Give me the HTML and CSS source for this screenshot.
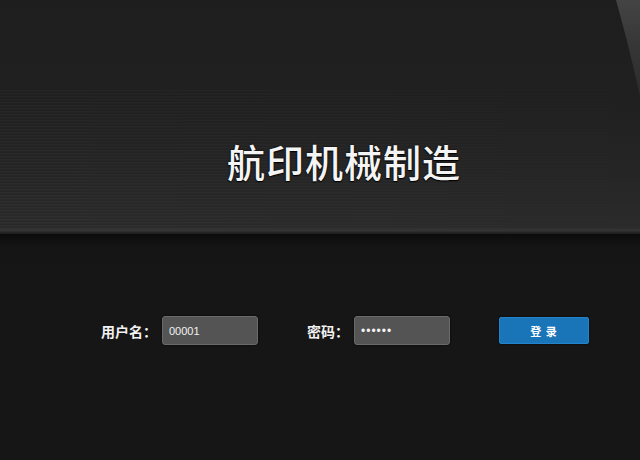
FILE: index.html
```html
<!DOCTYPE html>
<html lang="zh">
<head>
<meta charset="utf-8">
<title>航印机械制造</title>
<link rel="stylesheet" href="styles.css">
</head>
<body>
<div class="page">
  <header class="header">
    <div class="stripes"></div>
    <div class="corner"></div>
    <h1 class="title">航印机械制造</h1>
  </header>
  <main class="main">
    <form class="login">
      <label class="field">
        <span class="label">用户名：</span>
        <input class="input" type="text" value="00001">
      </label>
      <label class="field">
        <span class="label">密码：</span>
        <input class="input pass" type="password" value="123456">
      </label>
      <button class="btn" type="button">登 录</button>
    </form>
  </main>
</div>
</body>
</html>
```
FILE: styles.css
```css
html, body {
  margin: 0;
  padding: 0;
  background: #161616;
}
.page {
  width: 640px;
  height: 460px;
  overflow: hidden;
  font-family: "Liberation Sans", "Noto Sans CJK SC", sans-serif;
}
.header {
  position: relative;
  height: 234px;
  box-sizing: border-box;
  background: linear-gradient(to bottom, #1e1e1e 0%, #202020 40%, #262626 75%, #2b2b2b 97%, #343434 98.5%, #1a1a1a 100%);
  display: flex;
  align-items: flex-start;
  padding-left: 227px;
  padding-top: 139px;
}
.stripes {
  position: absolute;
  left: 0;
  top: 90px;
  width: 100%;
  height: 140px;
  background: repeating-linear-gradient(to bottom, rgba(255,255,255,0.025) 0px, rgba(255,255,255,0.025) 1px, rgba(0,0,0,0.06) 2px, rgba(0,0,0,0) 3px);
  -webkit-mask-image: linear-gradient(to right, #000 0%, rgba(0,0,0,0.7) 50%, rgba(0,0,0,0.2) 100%);
  mask-image: linear-gradient(to right, #000 0%, rgba(0,0,0,0.7) 50%, rgba(0,0,0,0.2) 100%);
}
.corner {
  position: absolute;
  right: 0;
  top: 0;
  width: 24px;
  height: 100px;
  background: linear-gradient(to bottom, #444 0%, #383838 40%, #2a2a2a 100%);
  clip-path: polygon(0 0, 100% 0, 100% 96%, 80% 75%, 45% 40%);
}
.title {
  position: relative;
  margin: 0;
  font-family: "Noto Sans CJK SC", sans-serif;
  font-size: 38px;
  line-height: 44px;
  font-weight: 500;
  color: #f4f4f4;
  letter-spacing: 1px;
  text-shadow: 0 1px 1px #000, 0 0 2px #000;
}
.main {
  background: linear-gradient(to bottom, #0c0c0c 0px, #141414 12px, #161616 40px);
  height: 226px;
  padding-top: 82px;
  box-sizing: border-box;
}
.login {
  display: flex;
  align-items: center;
  padding-left: 101px;
  margin: 0;
}
.field {
  display: flex;
  align-items: center;
  gap: 5px;
  margin-right: 49px;
}
.label {
  font-family: "Noto Sans CJK SC", sans-serif;
  font-size: 14px;
  font-weight: 700;
  color: #f2f2f2;
  line-height: 16px;
}
.input {
  width: 96px;
  height: 29px;
  box-sizing: border-box;
  margin: 0;
  padding: 0 6px;
  background: #545454;
  border: 1px solid #6a6a6a;
  border-radius: 3px;
  color: #f2f2f2;
  font-family: "Liberation Sans", sans-serif;
  font-size: 11px;
  outline: none;
  box-shadow: 0 0 2px #000;
}
.pass {
  font-size: 12px;
  letter-spacing: 1px;
}
.btn {
  width: 90px;
  height: 27px;
  margin: 0;
  padding: 0;
  background: #1a74b8;
  border: 1px solid #2284cc;
  border-radius: 2px;
  color: #ffffff;
  font-family: "Noto Sans CJK SC", sans-serif;
  font-size: 11px;
  font-weight: 700;
  letter-spacing: 1px;
  box-shadow: 0 0 2px #000;
}
```
